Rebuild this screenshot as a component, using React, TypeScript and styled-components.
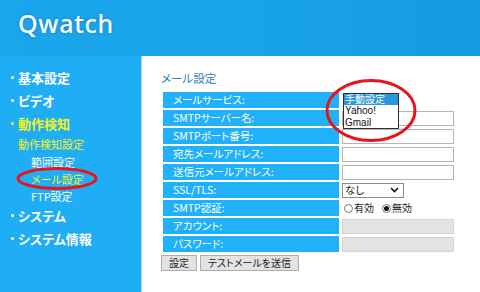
import styled, { createGlobalStyle } from "styled-components";

const GlobalStyle = createGlobalStyle`
  html, body {
    margin: 0;
    padding: 0;
    background: #ffffff;
  }
  body {
    font-family: "Noto Sans CJK JP", "Noto Sans", sans-serif;
    font-feature-settings: "palt";
  }
`;

const Page = styled.div`
  position: relative;
  width: 480px;
  height: 292px;
  overflow: hidden;
  background: #1fadf5;
  display: flex;
  flex-direction: column;
`;

const Header = styled.header`
  height: 56px;
  flex: none;
  display: flex;
  align-items: center;
  padding-left: 18px;
  padding-bottom: 10px;
  box-sizing: border-box;
  background: linear-gradient(90deg, #1ba6ec 0%, #18a2e8 60%, #149be2 100%);
`;

const Logo = styled.h1`
  margin: 0;
  font-family: "Noto Sans", "DejaVu Sans", sans-serif;
  font-size: 25px;
  font-weight: 500;
  color: #ffffff;
  letter-spacing: 0.7px;
  text-shadow: 0 0 3px rgba(0, 60, 120, 0.35);
`;

const Body = styled.div`
  flex: 1;
  display: flex;
`;

const Sidebar = styled.nav`
  width: 141px;
  flex: none;
  padding-top: 10px;
  display: flex;
  flex-direction: column;
`;

const MenuItem = styled.div<{ $active?: boolean }>`
  height: 23px;
  display: flex;
  align-items: center;
  padding-left: 11px;
  font-size: 13px;
  font-weight: 700;
  color: ${(p) => (p.$active ? "#f4f41a" : "#ffffff")};

  &::before {
    content: "";
    width: 3px;
    height: 3px;
    border-radius: 50%;
    background: currentColor;
    margin-right: 4px;
  }
`;

const SubHead = styled.div`
  height: 18px;
  display: flex;
  align-items: center;
  padding-left: 18px;
  font-size: 11px;
  color: #f4f41a;
`;

const SubItem = styled.div<{ $active?: boolean }>`
  height: 17px;
  display: flex;
  align-items: center;
  padding-left: 31px;
  font-size: 11px;
  color: ${(p) => (p.$active ? "#f4f41a" : "#ffffff")};
`;

const Content = styled.main`
  flex: 1;
  background: #ffffff;
  border-left: 1px solid #8fd6fb;
  padding: 15px 0 0 19px;
`;

const Title = styled.div`
  font-size: 11.5px;
  line-height: 14px;
  color: #2f7fc6;
  margin-bottom: 5px;
`;

const Table = styled.table`
  border-spacing: 2px;
  border-collapse: separate;
`;

const Label = styled.td`
  width: 166px;
  height: 16px;
  padding: 0 0 0 10px;
  background: #21b1fb;
  color: #ffffff;
  font-size: 10.5px;
  line-height: 16px;
  white-space: nowrap;
`;

const Value = styled.td`
  position: relative;
  width: 114px;
  height: 16px;
  padding: 0 0 0 1px;
  font-size: 11px;
  line-height: 16px;
`;

const TextBox = styled.div<{ $disabled?: boolean }>`
  width: 112px;
  height: 15px;
  box-sizing: border-box;
  border: 1px solid ${(p) => (p.$disabled ? "#d4d4d4" : "#b4b4b4")};
  background: ${(p) => (p.$disabled ? "#e3e3e3" : "#ffffff")};
`;

const SelectBox = styled.div`
  width: 62px;
  height: 15px;
  box-sizing: border-box;
  border: 1px solid #8c8c8c;
  display: flex;
  align-items: center;
  justify-content: space-between;
  padding: 0 4px 0 2px;
  font-size: 10.5px;
  color: #222;
  background: #fff;
`;

const RadioRow = styled.div`
  display: flex;
  align-items: center;
  gap: 1px;
  font-size: 10px;
  color: #222;
`;

const Radio = styled.span<{ $checked?: boolean }>`
  width: 9px;
  height: 9px;
  box-sizing: border-box;
  border: 1px solid #777;
  border-radius: 50%;
  margin-left: 2px;
  display: flex;
  align-items: center;
  justify-content: center;

  &::after {
    content: "";
    width: 5px;
    height: 5px;
    border-radius: 50%;
    background: ${(p) => (p.$checked ? "#111" : "transparent")};
  }
`;

const RadioLabel = styled.span`
  margin-right: 5px;
`;

const ListBox = styled.div`
  position: absolute;
  left: 2px;
  top: 1px;
  width: 56px;
  box-sizing: border-box;
  border: 1px solid #2e2e2e;
  background: #ffffff;
  display: flex;
  flex-direction: column;
  z-index: 2;
`;

const ListOption = styled.div<{ $selected?: boolean }>`
  height: 11.4px;
  flex: none;
  line-height: 11px;
  padding-left: 1px;
  font-size: 10px;
  font-family: "Liberation Sans", "Noto Sans CJK JP", sans-serif;
  color: ${(p) => (p.$selected ? "#ffffff" : "#111111")};
  background: ${(p) => (p.$selected ? "#2b97dc" : "transparent")};
  white-space: nowrap;
`;

const Buttons = styled.div`
  display: flex;
  gap: 3px;
  margin-top: 1px;
`;

const Button = styled.button`
  height: 16px;
  padding: 0 7px;
  font-family: "Noto Sans CJK JP", sans-serif;
  font-feature-settings: "palt";
  font-size: 10px;
  line-height: 14px;
  color: #222;
  background: #e3e3e3;
  border: 1px solid #adadad;
  border-radius: 0;
`;

const Marks = styled.svg`
  position: absolute;
  left: 0;
  top: 0;
  pointer-events: none;
`;

const rows: { label: string; kind: "text" | "menu" | "select" | "radio" | "off" }[] = [
  { label: "メールサービス:", kind: "menu" },
  { label: "SMTPサーバー名:", kind: "text" },
  { label: "SMTPポート番号:", kind: "text" },
  { label: "宛先メールアドレス:", kind: "text" },
  { label: "送信元メールアドレス:", kind: "text" },
  { label: "SSL/TLS:", kind: "select" },
  { label: "SMTP認証:", kind: "radio" },
  { label: "アカウント:", kind: "off" },
  { label: "パスワード:", kind: "off" },
];

function Field({ kind }: { kind: string }) {
  if (kind === "menu") {
    return (
      <ListBox>
        <ListOption $selected>手動設定</ListOption>
        <ListOption>Yahoo!</ListOption>
        <ListOption>Gmail</ListOption>
      </ListBox>
    );
  }
  if (kind === "select") {
    return (
      <SelectBox>
        なし
        <svg width="9" height="6" viewBox="0 0 9 6">
          <path d="M1 1 L4.5 4.5 L8 1" fill="none" stroke="#111" strokeWidth="1.6" />
        </svg>
      </SelectBox>
    );
  }
  if (kind === "radio") {
    return (
      <RadioRow>
        <Radio />
        <RadioLabel>有効</RadioLabel>
        <Radio $checked />
        <RadioLabel>無効</RadioLabel>
      </RadioRow>
    );
  }
  return <TextBox $disabled={kind === "off"} />;
}

export default function App() {
  return (
    <>
      <GlobalStyle />
      <Page>
        <Header>
          <Logo>Qwatch</Logo>
        </Header>
        <Body>
          <Sidebar>
            <MenuItem>基本設定</MenuItem>
            <MenuItem>ビデオ</MenuItem>
            <MenuItem $active>動作検知</MenuItem>
            <SubHead>動作検知設定</SubHead>
            <SubItem>範囲設定</SubItem>
            <SubItem $active>メール設定</SubItem>
            <SubItem>FTP設定</SubItem>
            <MenuItem>システム</MenuItem>
            <MenuItem>システム情報</MenuItem>
          </Sidebar>
          <Content>
            <Title>メール設定</Title>
            <Table>
              <tbody>
                {rows.map((r) => (
                  <tr key={r.label}>
                    <Label>{r.label}</Label>
                    <Value>
                      <Field kind={r.kind} />
                    </Value>
                  </tr>
                ))}
              </tbody>
            </Table>
            <Buttons>
              <Button>設定</Button>
              <Button>テストメールを送信</Button>
            </Buttons>
          </Content>
        </Body>
        <Marks width="480" height="292" viewBox="0 0 480 292">
          <ellipse cx="57" cy="178.5" rx="39" ry="10" fill="none" stroke="#e8141c" strokeWidth="3" />
          <ellipse cx="371" cy="110.5" rx="44" ry="30" fill="none" stroke="#e8141c" strokeWidth="3" />
        </Marks>
      </Page>
    </>
  );
}
